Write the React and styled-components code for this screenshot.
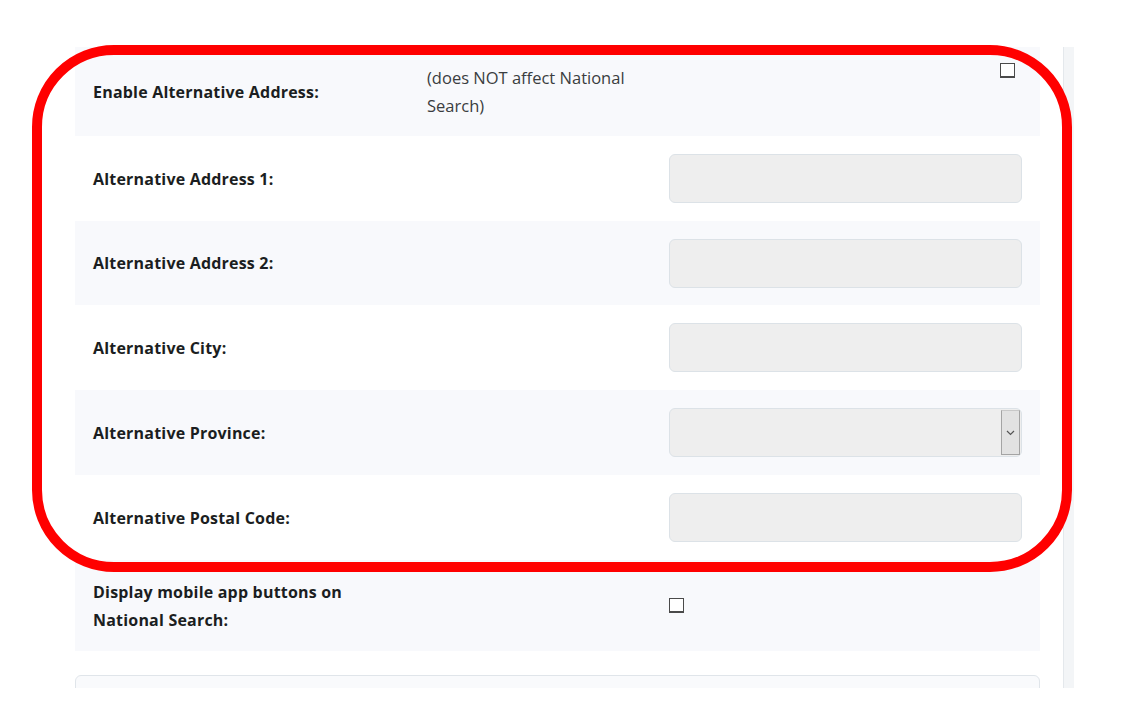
import React from 'react';
import styled, { createGlobalStyle } from 'styled-components';

const GlobalStyle = createGlobalStyle`
  html, body {
    margin: 0;
    padding: 0;
    background: #FFFFFF;
  }
  body {
    font-family: "Open Sans", "Liberation Sans", sans-serif;
    color: #212529;
  }
`;

// page wrapper
const Page = styled.div`
  position: relative;
  width: 1148px;
  height: 724px;
  padding: 47px 0 0 75px;
  box-sizing: border-box;
`;

// visible panel, clipped like a scroll area
const Viewport = styled.div`
  display: flex;
  gap: 23px;
  height: 641px;
  overflow: hidden;
`;

const Form = styled.div`
  width: 965px;
  flex-shrink: 0;
`;

const ScrollTrack = styled.div`
  width: 10px;
  background: #F3F5F7;
  border-left: 1px solid #E4E8EC;
`;

// form row
const Row = styled.div`
  display: grid;
  grid-template-columns: 310px 218px 353px;
  column-gap: 24px;
  align-items: center;
  height: ${(props) => props.$height}px;
  padding: 0 18px;
  background: ${(props) => (props.$shaded ? '#F8F9FC' : '#FFFFFF')};
`;

const Label = styled.label`
  max-width: 290px;
  font-weight: 700;
  font-size: 16px;
  letter-spacing: 0.2px;
  line-height: 28px;
  color: #1B1E21;
`;

const Note = styled.span`
  font-size: 16.5px;
  line-height: 28px;
  color: #3A3D40;
`;

const Control = styled.div`
  grid-column: 3;
  display: flex;
  justify-content: ${(props) => (props.$end ? 'flex-end' : 'flex-start')};
  align-self: ${(props) => (props.$top ? 'start' : 'center')};
  padding-right: ${(props) => (props.$end ? '7px' : '0')};
  padding-top: ${(props) => (props.$top ? '16px' : '0')};
`;

const TextInput = styled.input`
  box-sizing: border-box;
  width: 353px;
  height: 49px;
  border: 1px solid #DCE2E7;
  border-radius: 6px;
  background: #EEEEEE;
  outline: none;
`;

const SelectBox = styled.div`
  box-sizing: border-box;
  display: flex;
  justify-content: flex-end;
  width: 353px;
  height: 49px;
  padding: 1px 1px 1px 0;
  border: 1px solid #DCE2E7;
  border-radius: 6px;
  background: #EEEEEE;
`;

const SelectButton = styled.span`
  display: flex;
  align-items: center;
  justify-content: center;
  width: 19px;
  background: #E2E2E2;
  border: 1px solid #A4A4A4;
  border-top-color: #C8C8C8;
  box-sizing: border-box;
`;

const Check = styled.input.attrs({ type: 'checkbox' })`
  appearance: none;
  margin: 0;
  width: 15px;
  height: 15px;
  border: 1px solid #4A4A4A;
  border-bottom-width: 2px;
  background: #FFFFFF;
  box-sizing: border-box;
`;

const NextCard = styled.div`
  margin-top: 24px;
  height: 40px;
  border: 1px solid #E0E5EA;
  border-radius: 6px;
  background: #F9FAFC;
`;

// red highlight ring drawn over the form
const Highlight = styled.div`
  position: absolute;
  left: 32px;
  top: 45px;
  width: 1040px;
  height: 527px;
  box-sizing: border-box;
  border: 10px solid #FF0000;
  border-radius: 82px;
  pointer-events: none;
`;

const Chevron = () => (
  <svg width="9" height="6" viewBox="0 0 9 6">
    <polyline points="1 1 4.5 4.5 8 1" fill="none" stroke="#555" strokeWidth="1.2" />
  </svg>
);

const inputRows = [
  { label: 'Alternative Address 1:', height: 85 },
  { label: 'Alternative Address 2:', height: 84 },
  { label: 'Alternative City:', height: 85 },
  { label: 'Alternative Province:', height: 85, select: true },
  { label: 'Alternative Postal Code:', height: 85 },
];

export default function App() {
  return (
    <Page>
      <GlobalStyle />
      <Viewport>
        <Form>
          <Row $shaded $height={89}>
            <Label>Enable Alternative Address:</Label>
            <Note>(does NOT affect National Search)</Note>
            <Control $end $top>
              <Check />
            </Control>
          </Row>
          {inputRows.map((row, i) => (
            <Row key={row.label} $shaded={i % 2 === 1} $height={row.height}>
              <Label>{row.label}</Label>
              <Control>
                {row.select ? (
                  <SelectBox>
                    <SelectButton>
                      <Chevron />
                    </SelectButton>
                  </SelectBox>
                ) : (
                  <TextInput />
                )}
              </Control>
            </Row>
          ))}
          <Row $shaded $height={91}>
            <Label>Display mobile app buttons on National Search:</Label>
            <span />
            <Control>
              <Check />
            </Control>
          </Row>
          <NextCard />
        </Form>
        <ScrollTrack />
      </Viewport>
      <Highlight />
    </Page>
  );
}
